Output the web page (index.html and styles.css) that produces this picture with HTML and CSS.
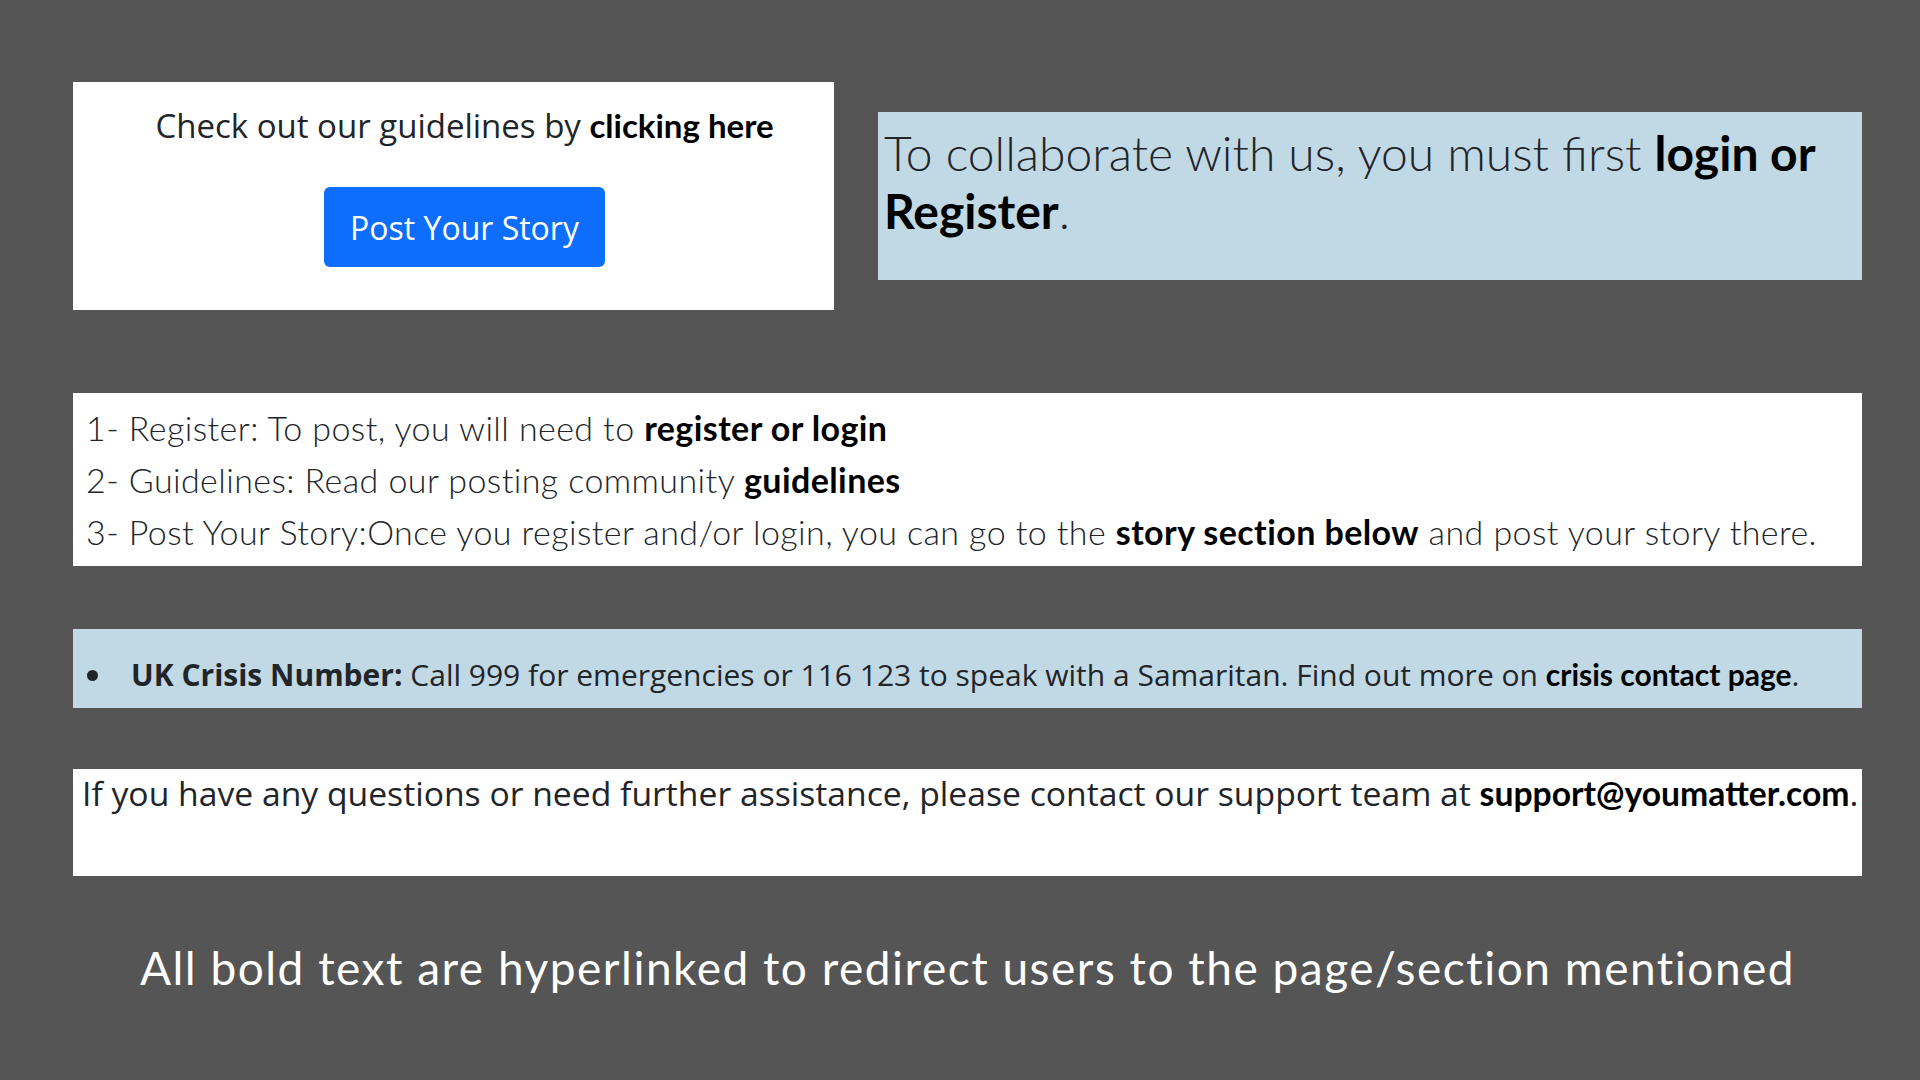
FILE: index.html
```html
<!DOCTYPE html>
<html lang="en">
<head>
<meta charset="utf-8">
<title>Post Your Story</title>
<link rel="stylesheet" href="styles.css">
</head>
<body>
<main class="page">
  <section class="top-row">
    <div class="card guide-card">
      <p class="guide-text">Check out our guidelines by <a class="link" href="#">clicking here</a></p>
      <a class="btn-post" href="#">Post Your Story</a>
    </div>
    <div class="card collab-card">
      <p class="collab-text">To collaborate with us, you must first <a class="link" href="#">login or Register</a>.</p>
    </div>
  </section>

  <section class="card steps-card">
    <p class="step">1- Register: To post, you will need to <a class="link" href="#">register or login</a></p>
    <p class="step">2- Guidelines: Read our posting community <a class="link" href="#">guidelines</a></p>
    <p class="step">3- Post Your Story:Once you register and/or login, you can go to the <a class="link" href="#">story section below</a> and post your story there.</p>
  </section>

  <section class="card crisis-card">
    <ul class="crisis-list">
      <li><strong>UK Crisis Number:</strong> Call 999 for emergencies or 116 123 to speak with a Samaritan. Find out more on <a class="link" href="#">crisis contact page</a>.</li>
    </ul>
  </section>

  <section class="card support-card">
    <p class="support-text">If you have any questions or need further assistance, please contact our support team at <a class="link" href="#">support@youmatter.com</a>.</p>
  </section>

  <p class="caption">All bold text are hyperlinked to redirect users to the page/section mentioned</p>
</main>
</body>
</html>
```

FILE: styles.css
```css
html, body {
  margin: 0;
  padding: 0;
}
body {
  background: #555555;
  width: 1920px;
  height: 1080px;
  overflow: hidden;
}
.page {
  padding: 82px 58px 0 73px;
  display: flex;
  flex-direction: column;
}
p { margin: 0; }
.link {
  color: #000;
  font-weight: 700;
  text-decoration: none;
  font-family: "Lato", sans-serif;
}
.card {
  box-sizing: border-box;
}
.top-row {
  display: flex;
  align-items: flex-start;
  gap: 44px;
}
.guide-card {
  background: #ffffff;
  width: 761px;
  height: 228px;
  display: flex;
  flex-direction: column;
  align-items: center;
  padding: 23px 0 0 22px;
}
.guide-text {
  font-family: "Open Sans", sans-serif;
  font-size: 33px;
  line-height: 40px;
  color: #212529;
  white-space: nowrap;
}
.btn-post {
  margin-top: 41px;
  background: #0d6efd;
  color: #fff;
  text-decoration: none;
  font-family: "Open Sans", sans-serif;
  font-size: 32px;
  width: 281px;
  height: 80px;
  border-radius: 6px;
  display: flex;
  align-items: center;
  justify-content: center;
}
.collab-card {
  margin-top: 30px;
  background: #c1d8e5;
  width: 984px;
  height: 168px;
  padding: 12px 20px 0 6px;
}
.collab-text {
  font-family: "Lato", sans-serif;
  font-weight: 300;
  font-size: 48px;
  line-height: 58px;
  color: #212529;
}
.steps-card {
  margin-top: 83px;
  background: #ffffff;
  height: 173px;
  padding: 9px 13px 0 13px;
}
.step {
  font-family: "Lato", sans-serif;
  font-weight: 300;
  font-size: 34px;
  letter-spacing: 0.42px;
  line-height: 52px;
  color: #212529;
  white-space: nowrap;
}
.crisis-card {
  margin-top: 63px;
  background: #c1d8e5;
  height: 79px;
  display: flex;
  align-items: center;
  padding-top: 12px;
}
.crisis-list {
  margin: 0;
  padding: 0 0 0 42px;
  font-family: "Open Sans", sans-serif;
  font-size: 30px;
  color: #212529;
  white-space: nowrap;
}
.crisis-list li { padding-left: 16px; }
.crisis-list strong { font-weight: 700; }
.support-card {
  margin-top: 61px;
  background: #ffffff;
  height: 107px;
  padding: 2px 0 0 9px;
}
.support-text {
  font-family: "Open Sans", sans-serif;
  font-size: 33.7px;
  line-height: 44px;
  color: #212529;
  white-space: nowrap;
}
.caption {
  margin-top: 62px;
  text-align: center;
  color: #ffffff;
  font-family: "Lato", sans-serif;
  font-size: 46px;
  letter-spacing: 1.5px;
  line-height: 60px;
}
```
